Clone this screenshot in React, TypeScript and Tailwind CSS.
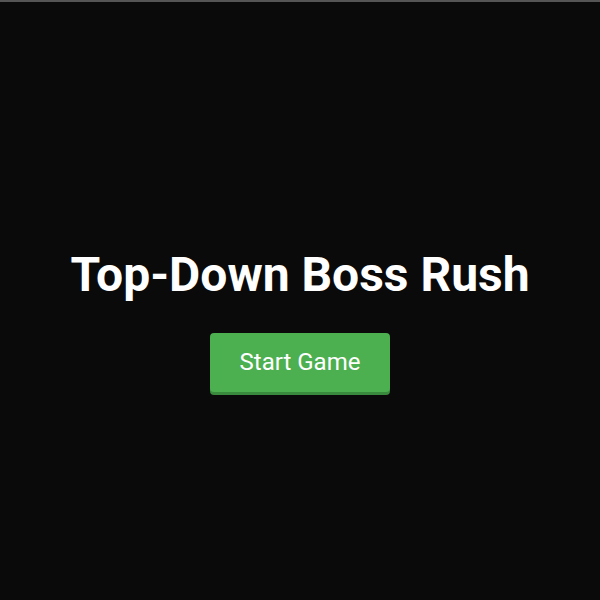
import React from 'react';

export default function App() {
  return (
    <div className="h-screen w-full bg-[#0a0a0a] border-t-2 border-[#555555] flex flex-col items-center justify-center pt-[36px]" style={{ fontFamily: 'Roboto, "Noto Sans", sans-serif' }}>
      <h1 className="text-[48px] font-bold text-white leading-[56px]">Top-Down Boss Rush</h1>
      <button className="mt-[30px] w-[180px] h-[59px] rounded bg-[#4caf50] text-white text-[24px] shadow-[0_3px_0_#3a8a3e]">
        Start Game
      </button>
    </div>
  );
}
